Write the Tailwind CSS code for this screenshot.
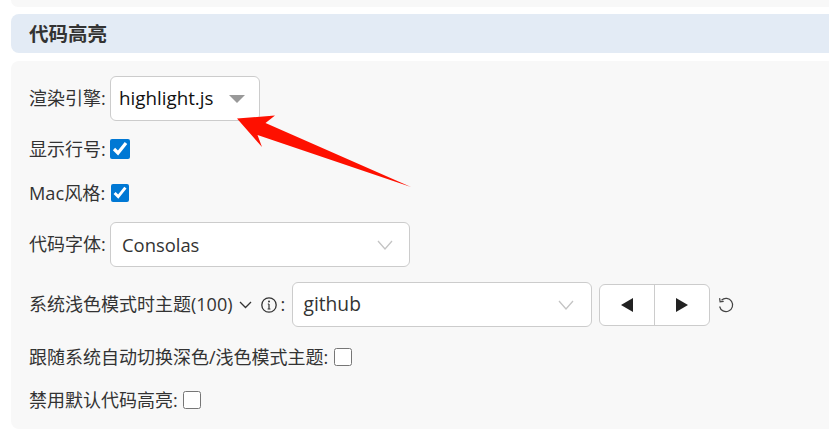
<!DOCTYPE html>
<html lang="zh-CN">
<head>
    <meta charset="UTF-8">
    <title>代码高亮</title>
    <script src="https://cdn.jsdelivr.net/npm/@tailwindcss/browser@4"></script>
</head>
<body class="bg-white overflow-hidden font-['Open_Sans','Noto_Sans_CJK_SC',sans-serif] text-[18px] text-[#333]">
    <div class="relative w-[829px] h-[435px] pl-[11px]">
        <!-- end of the previous section -->
        <div class="h-[7px] bg-[#f8f8f8] rounded-bl-lg"></div>

        <div class="mt-[7px] h-[39px] pl-[18px] flex items-center bg-[#e3ebf5] rounded-l-lg">
            <h2 class="text-[19.5px] font-bold leading-none">代码高亮</h2>
        </div>

        <div class="mt-[8px] h-[368px] pl-[18px] pt-[15px] bg-[#f8f8f8] rounded-l-lg">
            <div class="flex items-center h-[45px]">
                <span class="w-[81px]">渲染引擎:</span>
                <div class="w-[150px] h-[45px] pl-[8px] flex items-center bg-white border border-[#ccc] rounded-md text-[#111]">
                    <span class="text-[18.8px]">highlight.js</span>
                    <span class="ml-[15px] w-0 h-0 border-x-[8px] border-x-transparent border-t-[8px] border-t-[#999]"></span>
                </div>
            </div>

            <div class="flex items-center h-[20px] mt-[18px]">
                <span class="w-[81px]">显示行号:</span>
                <input type="checkbox" checked class="w-[20px] h-[20px] m-0 accent-[#0078d4]">
            </div>

            <div class="flex items-center h-[18px] mt-[25px]">
                <span class="w-[82px] text-[18.2px] pt-[1px]">Mac风格:</span>
                <input type="checkbox" checked class="w-[18px] h-[18px] m-0 accent-[#0078d4]">
            </div>

            <div class="flex items-center h-[45px] mt-[20px]">
                <span class="w-[81px]">代码字体:</span>
                <div class="w-[300px] h-[45px] pl-[11px] pr-[16px] flex items-center justify-between bg-white border border-[#ccc] rounded-md">
                    <span class="text-[18.4px]">Consolas</span>
                    <svg class="w-[16px] h-[10px]" viewBox="0 0 16 10" fill="none" stroke="#c4c4c4" stroke-width="1.3"><path d="M1 1l7 8 7-8"/></svg>
                </div>
            </div>

            <div class="flex items-center h-[45px] mt-[15px]">
                <span>系统浅色模式时主题(100)</span>
                <svg class="ml-[6px] w-[13px] h-[8px]" viewBox="0 0 13 8" fill="none" stroke="#333" stroke-width="1.3"><path d="M1 1l5.5 5.5L12 1"/></svg>
                <svg class="ml-[9px] w-[16px] h-[16px]" viewBox="0 0 16 16" fill="none" stroke="#333" stroke-width="1.3"><circle cx="8" cy="8" r="7.2"/><path d="M8 7v5M6.6 12h2.8M6.8 7H8" stroke-width="1.2"/><circle cx="8" cy="4.6" r="1" fill="#333" stroke="none"/></svg>
                <span class="ml-[4px] w-[11px]">:</span>
                <div class="w-[300px] h-[45px] pl-[11px] pr-[17px] flex items-center justify-between bg-white border border-[#ccc] rounded-md">
                    <span class="text-[19.2px]">github</span>
                    <svg class="w-[16px] h-[10px]" viewBox="0 0 16 10" fill="none" stroke="#c4c4c4" stroke-width="1.3"><path d="M1 1l7 8 7-8"/></svg>
                </div>
                <div class="ml-[7px] w-[111px] h-[42px] flex bg-white border border-[#ccc] rounded-md">
                    <button class="flex-1 flex items-center justify-center border-r border-[#ccc]">
                        <svg class="w-[12px] h-[14px]" viewBox="0 0 12 14"><path d="M0 7l12-7v14z" fill="#222"/></svg>
                    </button>
                    <button class="flex-1 flex items-center justify-center">
                        <svg class="w-[12px] h-[14px]" viewBox="0 0 12 14"><path d="M12 7L0 0v14z" fill="#222"/></svg>
                    </button>
                </div>
                <svg class="ml-[8px] w-[16px] h-[16px]" viewBox="0 0 16 16" fill="none" stroke="#444" stroke-width="1.2"><path d="M3.5 3.2A6.6 6.6 0 1 1 1.6 9.5"/><path d="M1.6 1.2l.5 3.6 3.6-.4"/></svg>
            </div>

            <div class="flex items-center h-[18px] mt-[21px]">
                <span class="w-[305px]">跟随系统自动切换深色/浅色模式主题:</span>
                <input type="checkbox" class="w-[18px] h-[18px] m-0">
            </div>

            <div class="flex items-center h-[18px] mt-[25px]">
                <span class="w-[154px]">禁用默认代码高亮:</span>
                <input type="checkbox" class="w-[18px] h-[18px] m-0">
            </div>
        </div>

        <!-- annotation arrow drawn over the form -->
        <svg class="absolute left-0 top-0 pointer-events-none" width="829" height="435" viewBox="0 0 829 435">
            <polygon points="237,118.5 275,115.5 265.5,123 411,187 257.5,135 262,147" fill="#fe1000"/>
        </svg>
    </div>
</body>
</html>
